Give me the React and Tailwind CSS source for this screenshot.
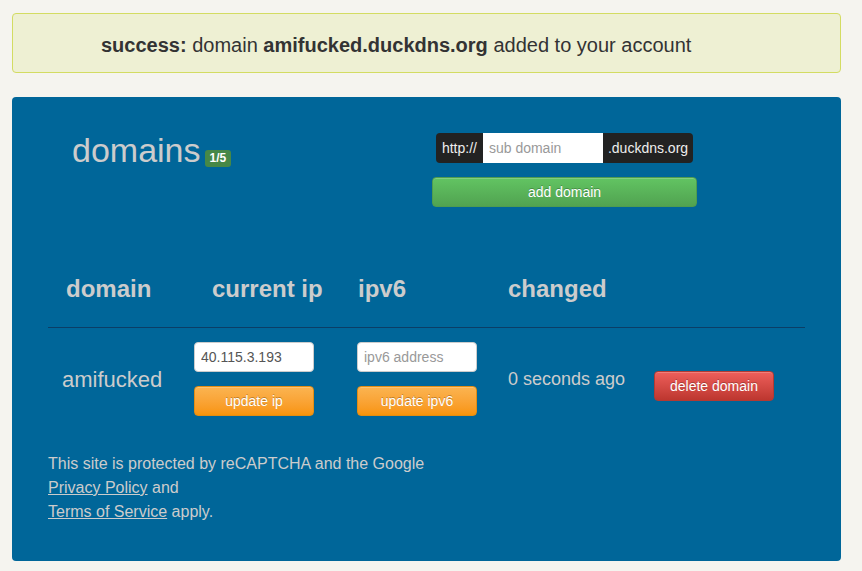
const font = { fontFamily: '"Liberation Sans", Arial, sans-serif' };

const btnBase =
  'h-[30px] w-[120px] rounded-[4px] border text-[14px] text-white [text-shadow:0_-1px_0_rgba(0,0,0,0.25)] shadow-[inset_0_1px_0_rgba(255,255,255,0.2)]';

const App = () => {
  return (
    <div className="min-h-screen bg-[#f5f4ef] pl-3 pr-[21px] pt-[13px] pb-[10px] text-[#333]" style={font}>
      {/* Success banner */}
      <div className="h-[60px] rounded-[4px] border border-[#d3dc62] bg-[#eef0d3] flex items-center pl-[88px] pt-[3px] text-[20px] text-[#333]">
        <span className="font-bold">success:</span>
        <span>&nbsp;domain&nbsp;</span>
        <span className="font-bold">amifucked.duckdns.org</span>
        <span>&nbsp;added to your account</span>
      </div>

      {/* Main panel */}
      <div className="mt-[24px] h-[464px] rounded-[4px] bg-[#006699] px-9 pt-[34px] text-[#cccccc]">
        {/* Header */}
        <div className="flex">
          <div className="w-[384px] pl-6 flex items-baseline">
            <span className="text-[34px] leading-[38px] text-[#cccccc]">domains</span>
            <span className="ml-[4px] rounded-[3px] bg-[#468847] px-[5px] py-[2px] text-[12px] leading-[13px] font-bold text-white">
              1/5
            </span>
          </div>
          <div className="w-[265px] flex flex-col items-center pt-[2px]">
            <div className="flex h-[30px] rounded-[4px] overflow-hidden text-[14px]">
              <span className="bg-[#222] text-[#eee] px-[6px] flex items-center">http://</span>
              <input
                className="w-[120px] bg-white px-[6px] text-[#555] placeholder:text-[#999] outline-none"
                placeholder="sub domain"
              />
              <span className="bg-[#222] text-[#eee] px-[5px] flex items-center">.duckdns.org</span>
            </div>
            <button
              className={`${btnBase} mt-[14px] w-[265px] border-[#4f9c4f] bg-gradient-to-b from-[#62c462] to-[#51a351]`}
            >
              add domain
            </button>
          </div>
        </div>

        {/* Table heading */}
        <div className="mt-[44px] h-[77px] grid grid-cols-[146px_163px_151px_146px_151px] items-center border-b border-[#0b3e66] text-[24px] font-bold text-[#cccccc]">
          <div className="pl-[18px]">domain</div>
          <div className="pl-[18px]">current ip</div>
          <div className="pl-px">ipv6</div>
          <div>changed</div>
          <div></div>
        </div>

        {/* Row */}
        <div className="pt-[14px] grid grid-cols-[146px_163px_151px_146px_151px] items-center">
          <div className="pl-[14px] text-[22px] text-[#cccccc]">amifucked</div>
          <div className="flex flex-col gap-[14px]">
            <input
              className="h-[30px] w-[120px] rounded-[4px] border border-[#ccc] bg-white px-[6px] text-[14px] text-[#555] outline-none"
              defaultValue="40.115.3.193"
            />
            <button className={`${btnBase} border-[#e38d13] bg-gradient-to-b from-[#fbb450] to-[#f89406]`}>
              update ip
            </button>
          </div>
          <div className="flex flex-col gap-[14px]">
            <input
              className="h-[30px] w-[120px] rounded-[4px] border border-[#ccc] bg-white px-[6px] text-[14px] text-[#555] placeholder:text-[#999] outline-none"
              placeholder="ipv6 address"
            />
            <button className={`${btnBase} border-[#e38d13] bg-gradient-to-b from-[#fbb450] to-[#f89406]`}>
              update ipv6
            </button>
          </div>
          <div className="text-[18px] text-[#cccccc]">0 seconds ago</div>
          <div className="mt-[14px]">
            <button className={`${btnBase} border-[#b33a33] bg-gradient-to-b from-[#ee5f5b] to-[#bd362f]`}>
              delete domain
            </button>
          </div>
        </div>

        {/* Footer */}
        <div className="mt-[36px] text-[16px] leading-[24px] text-[#cccccc]">
          <p>This site is protected by reCAPTCHA and the Google</p>
          <p>
            <a className="underline" href="#">Privacy Policy</a> and
          </p>
          <p>
            <a className="underline" href="#">Terms of Service</a> apply.
          </p>
        </div>
      </div>
    </div>
  );
};

export default App;
